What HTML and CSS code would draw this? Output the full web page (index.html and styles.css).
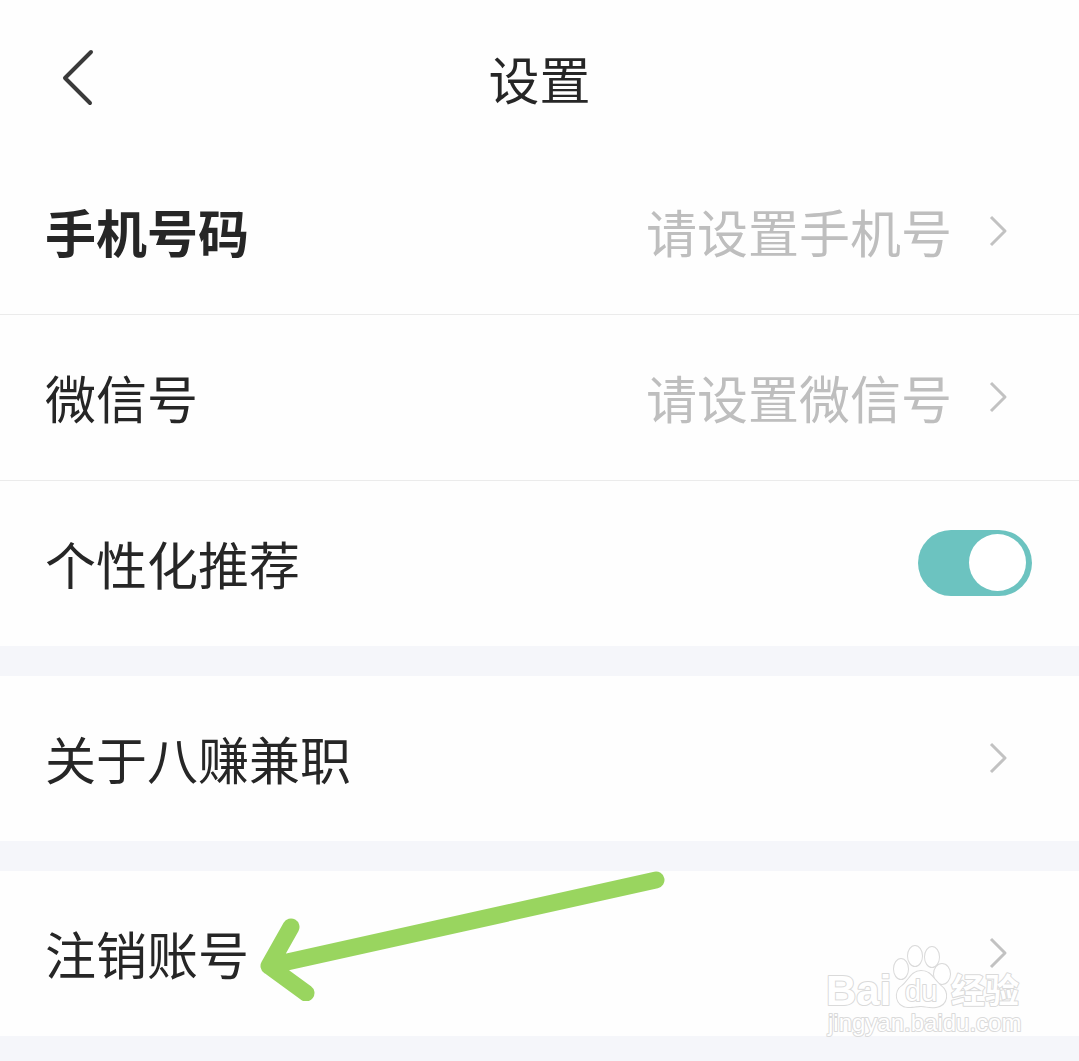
FILE: index.html
```html
<!DOCTYPE html>
<html lang="zh-CN">
<head>
  <meta charset="utf-8">
  <meta name="viewport" content="width=device-width, initial-scale=1">
  <title>设置</title>
  <link rel="stylesheet" href="styles.css">
</head>
<body>
  <header class="header">
    <button class="back" type="button" aria-label="返回">
      <svg class="back-icon" viewBox="0 0 36 60" aria-hidden="true"><path d="M31 4 5 30 30 55"/></svg>
    </button>
    <h1 class="title">设置</h1>
  </header>
  <main class="settings">
    <section class="group">
      <a class="row row-divided" href="#phone">
        <span class="label label-strong">手机号码</span>
        <span class="value">请设置手机号</span>
        <svg class="chevron" viewBox="0 0 20 34" aria-hidden="true"><path d="M3 3 17 17 3 31"/></svg>
      </a>
      <a class="row row-divided" href="#wechat">
        <span class="label">微信号</span>
        <span class="value">请设置微信号</span>
        <svg class="chevron" viewBox="0 0 20 34" aria-hidden="true"><path d="M3 3 17 17 3 31"/></svg>
      </a>
      <div class="row row-switch">
        <label class="label" for="personalized">个性化推荐</label>
        <input class="switch" id="personalized" type="checkbox" role="switch" checked>
      </div>
    </section>
    <section class="group">
      <a class="row" href="#about">
        <span class="label">关于八赚兼职</span>
        <svg class="chevron" viewBox="0 0 20 34" aria-hidden="true"><path d="M3 3 17 17 3 31"/></svg>
      </a>
    </section>
    <section class="group group-marked">
      <a class="row" href="#close-account">
        <span class="label">注销账号</span>
        <svg class="chevron" viewBox="0 0 20 34" aria-hidden="true"><path d="M3 3 17 17 3 31"/></svg>
      </a>
      <svg class="pointer" viewBox="0 0 410 140" aria-hidden="true"><path d="M401 19 14 105M36 66 14 105 51 132"/></svg>
      <svg class="watermark" viewBox="0 0 210 100" role="img" aria-label="Baidu 经验">
        <text class="mark-brand" x="6" y="65">Bai</text>
        <g class="mark-paw">
          <ellipse cx="81" cy="29" rx="7" ry="10"/>
          <ellipse cx="95" cy="16" rx="7" ry="10"/>
          <ellipse cx="112" cy="17" rx="7" ry="10"/>
          <ellipse cx="122" cy="34" rx="8" ry="10"/>
          <path d="M101 31C91 31 89 41 82 46C74 51 75 66 88 67C95 67 96 66 101 66C106 66 109 68 116 67C128 65 129 52 121 46C113 39 111 31 101 31Z"/>
        </g>
        <text class="mark-du" x="85" y="61">du</text>
        <text class="mark-cjk" x="131" y="63">经验</text>
        <text class="mark-url" x="8" y="91">jingyan.baidu.com</text>
      </svg>
    </section>
  </main>
</body>
</html>
```

FILE: styles.css
```css
* {
  box-sizing: border-box;
}

body {
  margin: 0;
  background: #f5f6fa;
  color: #262626;
  font-family: "Noto Sans CJK SC", sans-serif;
  font-size: 51px;
  line-height: 76px;
}

.header {
  display: grid;
  grid-template-columns: 1fr auto 1fr;
  align-items: center;
  height: 149px;
  padding: 6px 48px 0;
  background: #fefefe;
}

.back {
  display: flex;
  justify-self: start;
  padding: 12px;
  border: 0;
  background: none;
}

.back-icon {
  width: 36px;
  height: 60px;
  fill: none;
  stroke: #3a3a3a;
  stroke-width: 4;
  stroke-linecap: round;
  stroke-linejoin: round;
}

.title {
  margin: 0;
  font-size: 51px;
  font-weight: 400;
}

.settings {
  display: grid;
  gap: 30px;
  padding-bottom: 25px;
}

.group {
  background: #fefefe;
}

.group-marked {
  position: relative;
}

.row {
  display: flex;
  align-items: center;
  height: 165px;
  padding: 0 71px 2px 45px;
  color: inherit;
  text-decoration: none;
}

.row-divided {
  height: 166px;
  border-bottom: 1px solid #ebebeb;
}

.row-switch {
  padding-right: 47px;
}

.label {
  flex: 1;
}

.label-strong {
  font-weight: 700;
}

.value {
  margin-right: 36px;
  color: #bebebe;
}

.chevron {
  width: 20px;
  height: 34px;
  fill: none;
  stroke: #c2c2c2;
  stroke-width: 3;
  stroke-linejoin: round;
}

.switch {
  display: flex;
  align-items: center;
  width: 114px;
  height: 66px;
  margin: 0;
  padding: 0 6px;
  border-radius: 33px;
  background: #c8c8c8;
  appearance: none;
}

.switch::before {
  width: 57px;
  height: 57px;
  border-radius: 50%;
  background: #fff;
  content: "";
}

.switch:checked {
  justify-content: flex-end;
  background: #6cc3c0;
}

/* Hand-drawn style arrow laid over the last row */
.pointer {
  position: absolute;
  top: -10px;
  left: 255px;
  width: 410px;
  height: 140px;
  fill: none;
  stroke: #99d55f;
  stroke-width: 17;
  stroke-linecap: round;
  stroke-linejoin: round;
  pointer-events: none;
}

.watermark {
  position: absolute;
  right: 49px;
  bottom: -4px;
  width: 210px;
  height: 100px;
  fill: #fff;
  stroke: #dadada;
  stroke-width: 2;
  stroke-linejoin: round;
  paint-order: stroke;
  pointer-events: none;
}

.mark-brand {
  font: 700 42px "Liberation Sans", sans-serif;
}

.mark-du {
  font: 400 29px "Liberation Sans", sans-serif;
}

.mark-cjk {
  font: 700 34px "Noto Sans CJK SC", sans-serif;
}

.mark-url {
  font: 400 24px "Liberation Sans", sans-serif;
}
```
